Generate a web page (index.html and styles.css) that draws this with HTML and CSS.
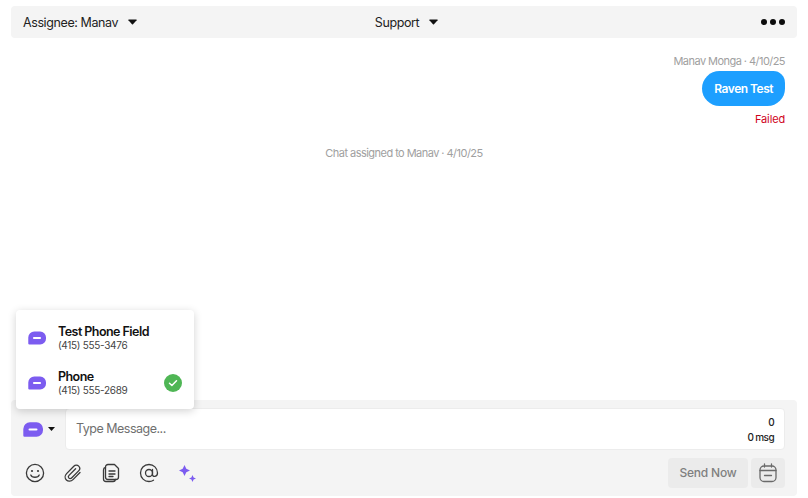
FILE: index.html
```html
<!DOCTYPE html>
<html lang="en">
<head>
<meta charset="utf-8">
<title>Chat</title>
<link rel="stylesheet" href="styles.css">
</head>
<body>
<div class="page">
  <header class="topbar">
    <div class="top-item"><span>Assignee: Manav</span><svg class="caret" viewBox="0 0 9 6"><path d="M0.8 0.4H8.2Q9 0.4 8.6 1.2L5 5.2Q4.5 5.7 4 5.2L0.4 1.2Q0 0.4 0.8 0.4Z"/></svg></div>
    <div class="top-item"><span>Support</span><svg class="caret" viewBox="0 0 9 6"><path d="M0.8 0.4H8.2Q9 0.4 8.6 1.2L5 5.2Q4.5 5.7 4 5.2L0.4 1.2Q0 0.4 0.8 0.4Z"/></svg></div>
    <div class="dots"><i></i><i></i><i></i></div>
  </header>
  <main class="thread">
    <div class="meta">Manav Monga · 4/10/25</div>
    <div class="bubble">Raven Test</div>
    <div class="failed">Failed</div>
    <div class="system">Chat assigned to Manav · 4/10/25</div>
  </main>
  <section class="composer">
    <div class="input-row">
      <div class="channel">
        <svg class="chat-icon" viewBox="0 0 20 15"><path d="M7 0.3H13.5A6.5 6.5 0 0 1 20 6.8V8.200A6.5 6.5 0 0 1 13.5 14.700H1.500A1.200 1.200 0 0 1 0.300 13.500V7A6.700 6.700 0 0 1 7 0.300Z" fill="#7c5cf0"/><rect x="5.500" y="6.400" width="9" height="2.200" rx="1.100" fill="#fff"/></svg>
        <svg class="mini-caret" viewBox="0 0 7 4"><path d="M0 0H7L3.5 4Z"/></svg>
      </div>
      <div class="input-box">
        <span class="placeholder">Type Message...</span>
        <div class="counts"><span>0</span><span>0 msg</span></div>
      </div>
    </div>
    <div class="tool-row">
      <div class="tools">
        <svg class="tool" viewBox="0 0 20 20"><circle cx="10" cy="10" r="8.6"/><circle cx="7" cy="8" r="1.1" class="solid"/><circle cx="13" cy="8" r="1.1" class="solid"/><path d="M5.8 12C7 15 13 15 14.2 12"/></svg>
        <svg class="tool" viewBox="0 0 20 20"><path d="M17 9.5L10 16.6C8 18.6 5 18.6 3.4 17C1.6 15.2 1.8 12.4 3.6 10.6L10.8 3.2C12.2 1.8 14.4 1.8 15.7 3.1C17 4.4 17 6.5 15.6 7.9L8.6 15C7.8 15.8 6.6 15.8 5.9 15.1C5.2 14.4 5.2 13.2 6 12.4L12.6 5.7"/></svg>
        <svg class="tool" viewBox="0 0 20 20"><path d="M7 1.5H13.5L17.5 5.5V14A2.5 2.5 0 0 1 15 16.5H7A2.5 2.5 0 0 1 4.500 14V4A2.500 2.500 0 0 1 7 1.500Z"/><path d="M4.500 4.500A2.500 2.500 0 0 0 2.500 7V16A2.500 2.500 0 0 0 5 18.500H12A2.500 2.500 0 0 0 14.500 16.500"/><path d="M8 8H14M8 11H14M8 13.500H12"/></svg>
        <svg class="tool" viewBox="0 0 20 20"><circle cx="10" cy="10" r="3.500"/><path d="M13.500 6.500V11.500C13.500 14.500 18.500 14 18.500 10C18.500 5 14.500 1.500 10 1.500C5 1.500 1.500 5.500 1.500 10C1.500 15 5.500 18.500 10 18.500C11.800 18.500 13.200 18 14.500 17.200"/></svg>
        <svg class="sparkle" viewBox="0 0 17 17"><path d="M5.500 0L7.300 3.700L11 5.500L7.300 7.300L5.500 11L3.700 7.300L0 5.500L3.700 3.700Z"/><path d="M13.500 10L14.600 12.400L17 13.500L14.600 14.600L13.500 17L12.400 14.600L10 13.500L12.400 12.400Z"/></svg>
      </div>
      <div class="actions">
        <div class="send">Send Now</div>
        <div class="schedule">
          <svg class="tool cal" viewBox="0 0 20 20"><rect x="2" y="3" width="16" height="15.500" rx="4"/><path d="M2 7.500H18M6.500 1V4M13.500 1V4M6.500 12.500H13.500"/></svg>
        </div>
      </div>
    </div>
  </section>
</div>
<div class="popover">
  <div class="option">
    <svg class="chat-icon small" viewBox="0 0 20 15"><path d="M7 0.3H13.5A6.5 6.5 0 0 1 20 6.8V8.200A6.5 6.5 0 0 1 13.5 14.700H1.500A1.200 1.200 0 0 1 0.300 13.500V7A6.700 6.700 0 0 1 7 0.300Z" fill="#7c5cf0"/><rect x="5.500" y="6.400" width="9" height="2.200" rx="1.100" fill="#fff"/></svg>
    <div class="option-text"><strong>Test Phone Field</strong><span>(415) 555-3476</span></div>
  </div>
  <div class="option">
    <svg class="chat-icon small" viewBox="0 0 20 15"><path d="M7 0.3H13.5A6.5 6.5 0 0 1 20 6.8V8.200A6.5 6.5 0 0 1 13.5 14.700H1.500A1.200 1.200 0 0 1 0.300 13.500V7A6.700 6.700 0 0 1 7 0.300Z" fill="#7c5cf0"/><rect x="5.500" y="6.400" width="9" height="2.200" rx="1.100" fill="#fff"/></svg>
    <div class="option-text"><strong>Phone</strong><span>(415) 555-2689</span></div>
    <svg class="check" viewBox="0 0 18 18"><circle cx="9" cy="9" r="9" fill="#4fb655"/><path d="M5.500 9.300L7.900 11.500L12.500 6.800" fill="none" stroke="#fff" stroke-width="1.500" stroke-linecap="round" stroke-linejoin="round"/></svg>
  </div>
</div>
</body>
</html>
```
FILE: styles.css
```css
* { box-sizing: border-box; }
html, body { margin: 0; height: 100%; }
body { font-family: Inter, "Liberation Sans", sans-serif; background: #fff; color: #1c1c1c; position: relative; overflow: hidden; }
.page { height: 498px; padding: 6px 11px 2px; display: flex; flex-direction: column; }
.topbar { height: 32px; background: #f4f4f4; border-radius: 4px; display: grid; grid-template-columns: 1fr 1fr 1fr; align-items: center; padding: 0 12px; font-size: 12.5px; letter-spacing: -0.4px; color: #222; }
.top-item { display: flex; align-items: center; gap: 10px; }
.top-item:nth-child(2) { justify-content: center; padding-left: 5px; }
.caret { width: 9px; height: 6px; fill: #111; }
.dots { justify-self: end; display: flex; gap: 3px; }
.dots i { width: 6px; height: 6px; border-radius: 50%; background: #0c0c0c; }
.thread { flex: 1; display: flex; flex-direction: column; align-items: flex-end; padding: 16px 12px 0; }
.meta { font-size: 11px; line-height: 14px; color: #a0a0a0; letter-spacing: -0.55px; }
.bubble { margin-top: 3px; height: 35px; padding: 0 12px; background: #1d9fff; color: #fff; font-size: 12px; font-weight: 600; line-height: 35px; letter-spacing: -0.5px; border-radius: 18px 12px 18px 18px; }
.failed { margin-top: 6px; font-size: 11px; line-height: 15px; color: #d0021b; letter-spacing: -0.15px; }
.system { align-self: center; margin-top: 20px; margin-bottom: 1px; font-size: 11px; line-height: 13px; color: #a0a0a0; letter-spacing: -0.54px; }
.composer { height: 96px; background: #f4f4f4; border-radius: 4px; padding: 8px 12px; display: flex; flex-direction: column; }
.input-row { display: flex; height: 42px; }
.channel { width: 42px; flex: none; display: flex; align-items: center; gap: 5px; }
.chat-icon { width: 20px; height: 15px; display: block; flex: none; }
.mini-caret { width: 7px; height: 4px; fill: #111; flex: none; }
.input-box { flex: 1; background: #fff; border: 1px solid #ececec; border-radius: 4px; display: flex; justify-content: space-between; align-items: center; padding: 0 10px; }
.placeholder { font-size: 12.5px; color: #6f6f6f; letter-spacing: -0.5px; margin-bottom: 2px; }
.counts { display: flex; flex-direction: column; align-items: flex-end; padding-top: 2px; font-size: 10px; line-height: 15px; font-weight: 500; color: #222; letter-spacing: -0.6px; }
.tool-row { margin-top: auto; height: 30px; display: flex; justify-content: space-between; align-items: center; }
.tools { display: flex; align-items: center; gap: 18px; padding-left: 2px; }
.tool { width: 20px; height: 20px; fill: none; stroke: #3a3a3a; stroke-width: 1.300; stroke-linecap: round; stroke-linejoin: round; flex: none; }
.tool .solid { fill: #3a3a3a; stroke: none; }
.sparkle { width: 17px; height: 17px; margin-left: 2px; fill: #7c5cf0; flex: none; }
.actions { display: flex; gap: 3px; }
.send { width: 80px; height: 30px; background: #ebebeb; border-radius: 4px; text-align: center; font-size: 12px; line-height: 30px; font-weight: 500; color: #7f7f7f; letter-spacing: -0.2px; }
.schedule { width: 34px; height: 30px; background: #ebebeb; border-radius: 4px; display: flex; align-items: center; justify-content: center; }
.cal { stroke: #6a6a6a; }
.popover { position: absolute; left: 16px; top: 310px; width: 178px; height: 99px; background: #fff; border-radius: 4px; box-shadow: 0 2px 8px rgba(0,0,0,.18); padding: 2px 12px 0; display: flex; flex-direction: column; justify-content: center; gap: 15px; }
.option { display: flex; align-items: center; height: 30px; }
.chat-icon.small { width: 18px; height: 14px; margin-right: 12px; }
.option-text { flex: 1; display: flex; flex-direction: column; }
.option-text strong { font-size: 12.5px; line-height: 15px; font-weight: 600; color: #111; letter-spacing: -0.55px; }
.option-text span { font-size: 10px; line-height: 13px; color: #444; letter-spacing: -0.3px; }
.check { width: 18px; height: 18px; flex: none; }
```
